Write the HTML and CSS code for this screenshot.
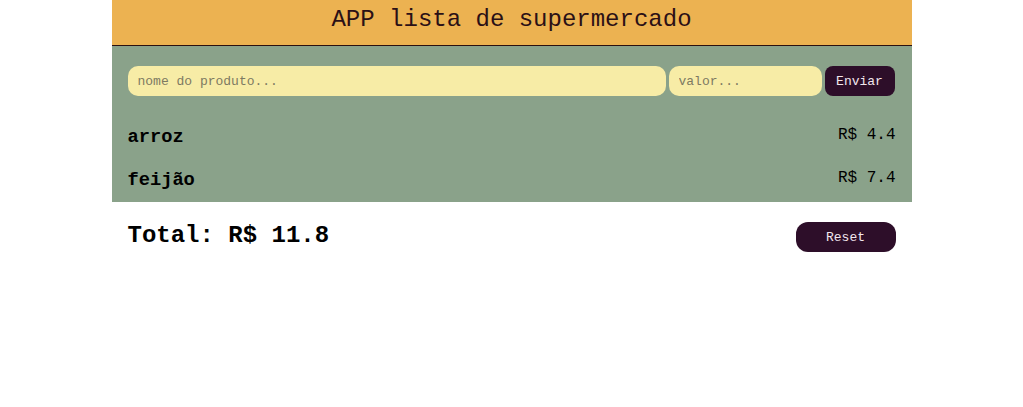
FILE: index.html
```html
<!DOCTYPE html>
<html lang="pt-BR">
<head>
<meta charset="utf-8">
<title>APP lista de supermercado</title>
<link rel="stylesheet" href="styles.css">
</head>
<body>
<div class="app">
  <header class="app-header">
    <h1 class="title">APP lista de supermercado</h1>
  </header>
  <section class="panel">
    <form class="add-form">
      <input class="field field-name" type="text" placeholder="nome do produto...">
      <input class="field field-value" type="text" placeholder="valor...">
      <button class="btn btn-send" type="button">Enviar</button>
    </form>
    <ul class="items">
      <li class="item"><span class="item-name">arroz</span><span class="item-price">R$ 4.4</span></li>
      <li class="item"><span class="item-name">feijão</span><span class="item-price">R$ 7.4</span></li>
    </ul>
  </section>
  <footer class="summary">
    <h2 class="total">Total: R$ 11.8</h2>
    <button class="btn btn-reset" type="button">Reset</button>
  </footer>
</div>
</body>
</html>
```

FILE: styles.css
```css
* { box-sizing: border-box; }
body {
  margin: 0;
  background: #ffffff;
  font-family: "Liberation Mono", "DejaVu Sans Mono", monospace;
  color: #000;
}
.app {
  width: 800px;
  margin: 0 auto;
}
.app-header {
  height: 46px;
  background: #ecb251;
  border-bottom: 1px solid #2a1010;
  display: flex;
  align-items: center;
  justify-content: center;
}
.title {
  margin: 0;
  font-size: 24px;
  font-weight: normal;
  color: #2b1016;
  line-height: 1;
  padding-bottom: 5px;
}
.panel {
  background: #8aa28a;
  padding: 20px 16px 0 16px;
}
.add-form {
  display: flex;
  gap: 3px;
  height: 30px;
}
.field {
  border: none;
  outline: none;
  background: #f7eca6;
  border-radius: 10px;
  height: 30px;
  padding: 0 10px;
  font-family: "Liberation Mono", monospace;
  font-size: 13px;
  color: #333;
}
.field::placeholder { color: #7d7a62; }
.field-name { width: 538px; }
.field-value { width: 153px; }
.btn {
  border: none;
  background: #2d0e29;
  color: #f2e6ee;
  font-family: "Liberation Mono", monospace;
  font-size: 13px;
  height: 30px;
  cursor: pointer;
}
.btn-send {
  width: 70px;
  border-radius: 8px;
  padding: 0;
}
.items {
  list-style: none;
  margin: 0;
  padding: 20px 0 0 0;
}
.item {
  display: flex;
  justify-content: space-between;
  align-items: flex-start;
  height: 43px;
}
.item-name {
  font-weight: bold;
  font-size: 18.72px;
  line-height: 43px;
}
.item-price {
  font-size: 16px;
  line-height: 38px;
}
.summary {
  display: flex;
  justify-content: space-between;
  align-items: flex-start;
  padding: 20px 16px 0 16px;
}
.total {
  margin: 0;
  font-size: 24px;
  font-weight: bold;
  line-height: 28px;
}
.btn-reset {
  width: 100px;
  border-radius: 12px;
}
```
